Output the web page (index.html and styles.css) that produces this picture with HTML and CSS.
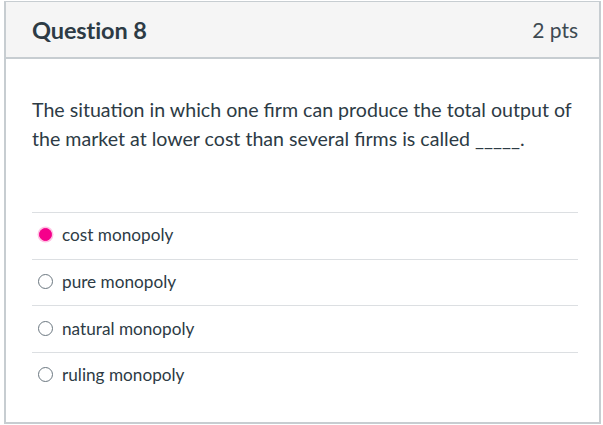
FILE: index.html
```html
<!DOCTYPE html>
<html>
<head>
<meta charset="utf-8">
<link rel="stylesheet" href="styles.css">
</head>
<body>
<div class="question">
  <div class="header">
    <span class="title">Question 8</span>
    <span class="pts">2 pts</span>
  </div>
  <div class="content">
    <p class="text">The situation in which one firm can produce the total output of the market at lower cost than several firms is called _____.</p>
    <ul class="answers">
      <li class="answer"><span class="radio checked"></span><span>cost monopoly</span></li>
      <li class="answer"><span class="radio"></span><span>pure monopoly</span></li>
      <li class="answer"><span class="radio"></span><span>natural monopoly</span></li>
      <li class="answer"><span class="radio"></span><span>ruling monopoly</span></li>
    </ul>
  </div>
</div>
</body>
</html>
```
FILE: styles.css
```css
html, body { margin: 0; padding: 0; background: #fff; }
body { font-family: Lato, "Open Sans", sans-serif; color: #2d3b45; }
.question {
  margin: 1px 2px 0 4px;
  height: 423px;
  border: 2px solid #c7cdd1;
  border-top-width: 1px;
  box-sizing: border-box;
  display: flex;
  flex-direction: column;
}
.header {
  height: 57px;
  box-sizing: border-box;
  background: #f5f5f5;
  border-bottom: 2px solid #c7cdd1;
  display: flex;
  align-items: center;
  justify-content: space-between;
  padding: 0 21px 0 26px;
}
.title { font-size: 23.5px; font-weight: 700; letter-spacing: -0.1px; }
.pts { font-size: 21px; font-weight: 400; color: #3e4a52; }
.content { padding: 0 21px 0 26px; }
.text {
  font-size: 19.6px;
  line-height: 29px;
  margin: 36px 0 0 0;
}
.answers { list-style: none; margin: 59px 0 0 0; padding: 0; }
.answer {
  height: 46.7px;
  box-sizing: border-box;
  border-top: 1px solid #dcdfe2;
  display: flex;
  align-items: center;
  padding-left: 6px;
  padding-bottom: 2px;
  font-size: 17.2px;
  gap: 9px;
}
.radio {
  width: 15px;
  height: 15px;
  border: 1px solid #6b7780;
  border-radius: 50%;
  box-sizing: border-box;
  flex: none;
}
.radio.checked {
  width: 13px;
  height: 13px;
  margin: 0 1px;
  background: #f5008b;
  border-color: #f5008b;
  box-shadow: 0 0 0 1.5px #ffc2e3;
}
```
